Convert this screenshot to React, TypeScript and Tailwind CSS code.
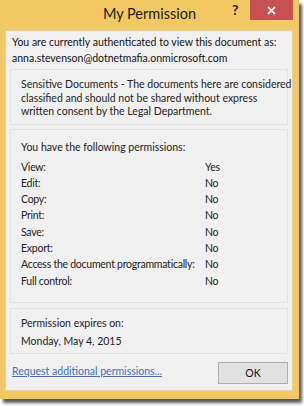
import React from "react";

const PERMS: [string, string][] = [
  ["View:", "Yes"],
  ["Edit:", "No"],
  ["Copy:", "No"],
  ["Print:", "No"],
  ["Save:", "No"],
  ["Export:", "No"],
  ["Access the document programmatically:", "No"],
  ["Full control:", "No"],
];

export default function App() {
  return (
    <div
      className="w-[304px] h-[406px] bg-white overflow-hidden"
      style={{ fontFamily: 'Lato, "Noto Sans", sans-serif' }}
    >
      <div className="w-[299px] h-[399px] bg-[#f1c863] flex flex-col shadow-[3px_4px_3px_rgba(0,0,0,0.65)]">
        {/* title bar */}
        <div className="relative h-[30px] shrink-0 flex items-center justify-center">
          <span className="text-[14.5px] text-[#222] leading-none mt-[-1px]">My Permission</span>
          <span className="absolute left-[232px] top-[3px] text-[14px] font-bold text-[#222] leading-none">?</span>
          <div className="absolute left-[250px] top-0 w-[43px] h-[20px] bg-[#c75050] flex items-center justify-center">
            <svg width="9" height="9" viewBox="0 0 10 10">
              <path d="M1 1 L9 9 M9 1 L1 9" stroke="white" strokeWidth="1.8" />
            </svg>
          </div>
        </div>

        {/* client area */}
        <div className="flex-1 ml-[5px] mr-[6px] mb-[8px] bg-[#f0f0f0] border border-[#e2d2a8] flex flex-col px-[4px] text-[10.5px] text-[#111] whitespace-nowrap">
          <div className="pl-[2px] pt-[3px] leading-[16px]">
            <div>You are currently authenticated to view this document as:</div>
            <div>anna.stevenson@dotnetmafia.onmicrosoft.com</div>
          </div>

          <div className="mt-[3px] border border-[#e1e1e1] pl-[10px] pr-[6px] pt-[8px] pb-[5px] leading-[13.5px] text-[#222]">
            Sensitive Documents - The documents here are considered
            <br />
            classified and should not be shared without express
            <br />
            written consent by the Legal Department.
          </div>

          <div className="mt-[4px] border border-[#e1e1e1] pl-[10px] pt-[9px] pb-[13px] text-[#222]">
            <div className="leading-[16px] mb-[4px]">You have the following permissions:</div>
            {PERMS.map(([k, v]) => (
              <div key={k} className="flex leading-[16.3px] tracking-[-0.25px]">
                <span className="w-[184px] shrink-0">{k}</span>
                <span>{v}</span>
              </div>
            ))}
          </div>

          <div className="mt-[5px] border border-[#e1e1e1] pl-[10px] pt-[5px] pb-[3px] leading-[18px] text-[#222]">
            <div>Permission expires on:</div>
            <div>Monday, May 4, 2015</div>
          </div>

          <div className="flex items-start justify-between mt-[8px] pl-[2px]">
            <a className="text-[#3e6fb3] underline leading-[16px] mt-[1px]">Request additional permissions...</a>
            <button className="w-[70px] h-[22px] bg-[#e1e1e1] border border-[#adadad] text-[10.5px] text-[#111] leading-none">
              OK
            </button>
          </div>
        </div>
      </div>
    </div>
  );
}
